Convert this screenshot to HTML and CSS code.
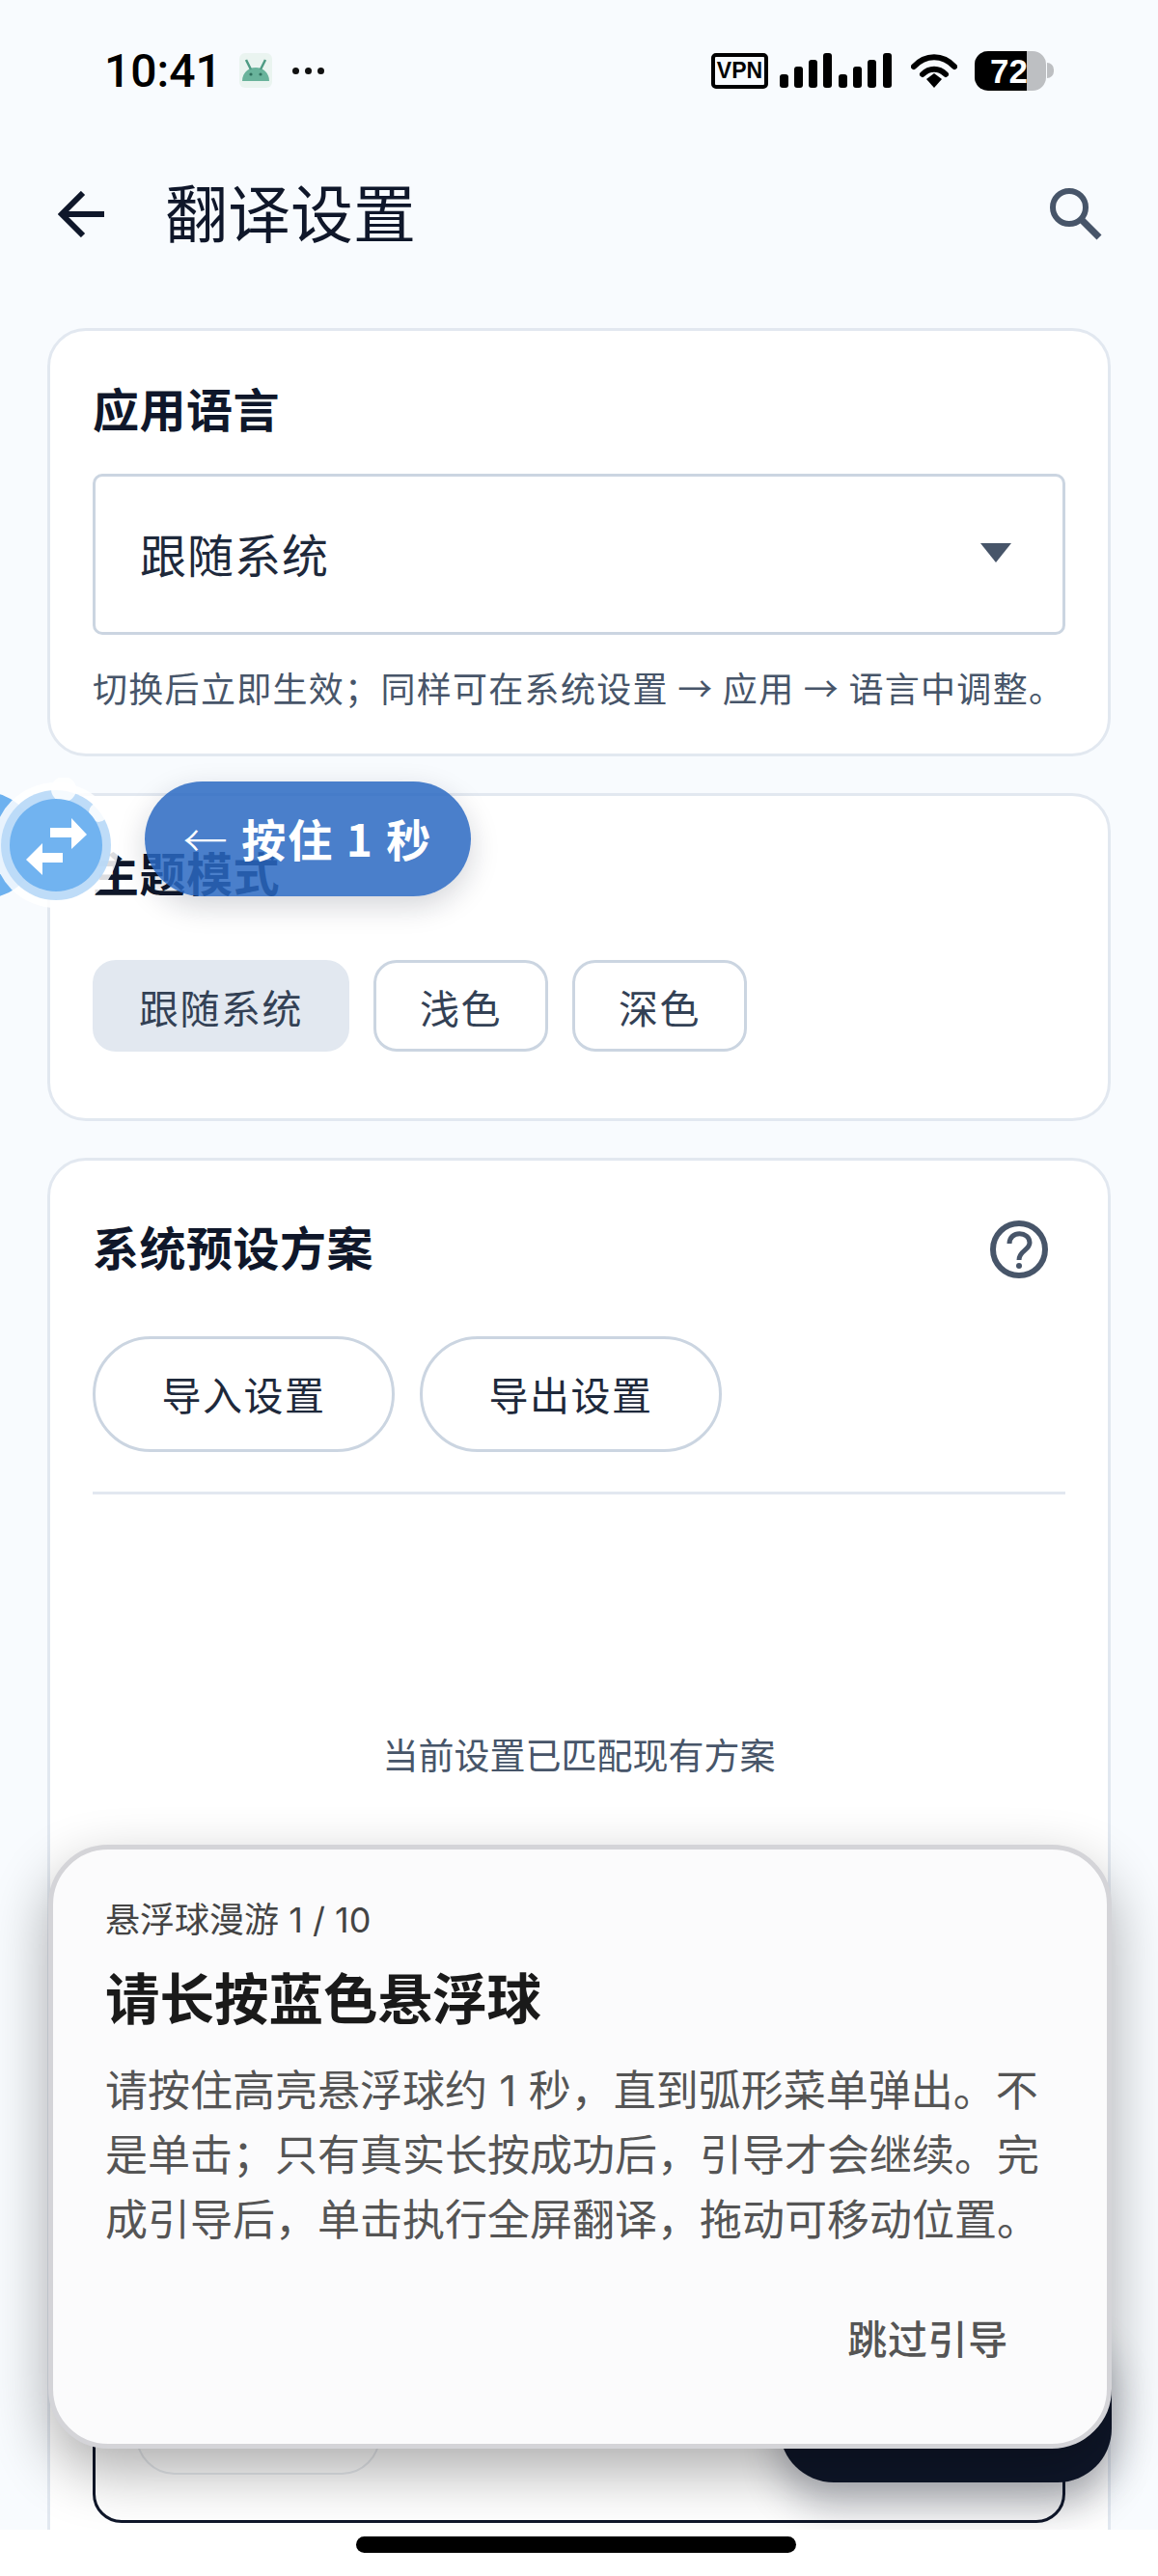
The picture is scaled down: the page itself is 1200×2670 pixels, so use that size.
FILE: index.html
```html
<!DOCTYPE html>
<html lang="zh-CN">
<head>
    <meta charset="UTF-8">
    <meta name="viewport" content="width=device-width, initial-scale=1.0">
    <title>翻译设置</title>
    <link rel="stylesheet" href="styles.css">
</head>
<body>
    <div class="status-bar">
        <div class="status-left">
            <span class="clock">10:41</span>
            <span class="app-tile">
                <svg width="30" height="24" viewBox="0 0 30 24"><path d="M1 23C1 15 7 9 15 9s14 6 14 14z" fill="#69b39b"/><path d="M5 1l5 10M25 1l-5 10" stroke="#4f9c85" stroke-width="2.5"/><circle cx="10" cy="16" r="1.6" fill="#2f6f5d"/><circle cx="20" cy="16" r="1.6" fill="#2f6f5d"/></svg>
            </span>
            <span class="dots"><i></i><i></i><i></i></span>
        </div>
        <div class="status-right">
            <span class="vpn">VPN</span>
            <svg class="signal" width="116" height="36" viewBox="0 0 116 36" fill="#000">
                <rect x="0" y="22" width="9" height="14" rx="3"/><rect x="15" y="14" width="9" height="22" rx="3"/><rect x="30" y="7" width="9" height="29" rx="3"/><rect x="45" y="0" width="9" height="36" rx="3"/>
                <rect x="61" y="22" width="9" height="14" rx="3"/><rect x="76" y="14" width="9" height="22" rx="3"/><rect x="91" y="7" width="9" height="29" rx="3"/><rect x="107" y="0" width="9" height="36" rx="3"/>
            </svg>
            <svg class="wifi" width="48" height="36" viewBox="0 0 48 36" fill="none" stroke="#000" stroke-linecap="round">
                <path d="M3 14C15 1 33 1 45 14" stroke-width="6"/>
                <path d="M12 22c7-7 17-7 24 0" stroke-width="6"/>
                <path d="M16 27l8-6 8 6-8 9z" fill="#000" stroke="none"/>
            </svg>
            <span class="battery"><span class="battery-fill">72</span></span>
            <span class="battery-tip"></span>
        </div>
    </div>

    <header class="topbar">
        <svg class="back" width="48" height="48" viewBox="0 0 48 48" fill="none" stroke="#0f172a" stroke-width="6"><path d="M48 24H4M26 2L4 24l22 22"/></svg>
        <h1>翻译设置</h1>
        <svg class="search" width="54" height="54" viewBox="0 0 54 54" fill="none" stroke="#475569"><circle cx="20" cy="20" r="17" stroke-width="6"/><path d="M32 32l19 19" stroke-width="7"/></svg>
    </header>

    <main class="content">
        <section class="card card-lang">
            <h2>应用语言</h2>
            <div class="select">
                <span>跟随系统</span>
                <span class="caret"></span>
            </div>
            <p class="hint">切换后立即生效；同样可在系统设置 → 应用 → 语言中调整。</p>
        </section>

        <section class="card card-theme">
            <h2>主题模式</h2>
            <div class="chips">
                <span class="chip chip-active">跟随系统</span>
                <span class="chip">浅色</span>
                <span class="chip">深色</span>
            </div>
        </section>

        <section class="card card-preset">
            <div class="card-head">
                <h2>系统预设方案</h2>
                <svg width="60" height="60" viewBox="0 0 60 60" fill="none" stroke="#475569"><circle cx="30" cy="30" r="27" stroke-width="6"/><path d="M20 24c0-14 21-13 21-1 0 8-11 8-11 18" stroke-width="5"/><circle cx="30" cy="47" r="3" fill="#475569" stroke="none"/></svg>
            </div>
            <div class="pill-row">
                <span class="pill">导入设置</span>
                <span class="pill">导出设置</span>
            </div>
            <div class="divider"></div>
            <p class="match">当前设置已匹配现有方案</p>
            <div class="field">
                <span class="ghost"></span>
            </div>
        </section>
    </main>

    <!-- floating ball with its long-press hint -->
    <svg class="ball" width="130" height="140" viewBox="0 0 130 140">
        <circle cx="-16" cy="70" r="55" fill="#6db1ef"/>
        <circle cx="58" cy="70" r="65" fill="#fff" fill-opacity=".85"/>
        <circle cx="58" cy="70" r="57" fill="#b7d8f7" fill-opacity=".9"/>
        <circle cx="66" cy="12" r="13" fill="#fff" fill-opacity=".85"/>
        <circle cx="102" cy="36" r="10" fill="#fff" fill-opacity=".85"/>
        <circle cx="58" cy="70" r="48" fill="#6db1ef" fill-opacity=".96"/>
        <path d="M52 52h22V42l16 17-16 15V62H52z" fill="#fff"/>
        <path d="M65 78H44V68L27 85l17 16V88h21z" fill="#fff"/>
    </svg>
    <div class="ball-hint"><span class="hint-arrow">←</span> 按住 1 秒</div>

    <div class="fab"></div>

    <aside class="guide">
        <div class="guide-step">悬浮球漫游 1 / 10</div>
        <h3>请长按蓝色悬浮球</h3>
        <p>请按住高亮悬浮球约 1 秒，直到弧形菜单弹出。不是单击；只有真实长按成功后，引导才会继续。完成引导后，单击执行全屏翻译，拖动可移动位置。</p>
        <div class="guide-actions"><span>跳过引导</span></div>
    </aside>

    <div class="nav-bar"><span class="nav-handle"></span></div>
</body>
</html>
```

FILE: styles.css
```css
* {
    margin: 0;
    padding: 0;
    box-sizing: border-box;
}

html,
body {
    width: 1200px;
    height: 2670px;
    overflow: hidden;
}

body {
    position: relative;
    background-color: #f8fbfe;
    color: #0f172a;
    font-family: "Inter", "Noto Sans CJK SC", sans-serif;
}

/* Status bar */
.status-bar {
    display: flex;
    justify-content: space-between;
    align-items: center;
    height: 146px;
    padding: 0 108px 0 108px;
}

.status-left,
.status-right {
    display: flex;
    align-items: center;
}

.clock {
    font-family: "Roboto", sans-serif;
    font-size: 48px;
    font-weight: 500;
    color: #000;
    width: 140px;
}

.app-tile {
    display: flex;
    justify-content: center;
    align-items: center;
    width: 34px;
    height: 36px;
    background-color: #eaf4f0;
    border-radius: 6px;
}

.dots {
    display: flex;
    gap: 6px;
    margin-left: 21px;
}

.dots i {
    width: 7px;
    height: 7px;
    border-radius: 50%;
    background-color: #111;
}

.vpn {
    width: 59px;
    height: 37px;
    border: 4px solid #000;
    border-radius: 5px;
    font-family: "Liberation Sans", sans-serif;
    font-size: 23px;
    font-weight: bold;
    line-height: 29px;
    text-align: center;
    color: #000;
}

.signal {
    margin-left: 12px;
}

.wifi {
    margin-left: 20px;
}

.battery {
    display: block;
    width: 74px;
    height: 41px;
    margin-left: 18px;
    background-color: #bdbfc2;
    border-radius: 14px;
    overflow: hidden;
}

.battery-fill {
    display: block;
    width: 54px;
    height: 41px;
    padding-left: 16px;
    background-color: #000;
    color: #fff;
    font-family: "Liberation Sans", sans-serif;
    font-size: 35px;
    font-weight: bold;
    line-height: 41px;
    white-space: nowrap;
    overflow: hidden;
}

.battery-tip {
    width: 7px;
    height: 16px;
    margin-left: 1px;
    background-color: #bdbfc2;
    border-radius: 0 8px 8px 0;
}

/* Top bar */
.topbar {
    display: flex;
    align-items: center;
    height: 152px;
    padding: 0 58px 0 60px;
}

.topbar h1 {
    flex: 1;
    margin-left: 63px;
    padding-top: 2px;
    font-size: 65px;
    font-weight: 400;
    line-height: 80px;
    color: #0f172a;
}

/* Cards */
.content {
    display: flex;
    flex-direction: column;
    gap: 38px;
    padding: 42px 49px 0;
}

.card {
    background-color: #fff;
    border: 3px solid #e2e8f0;
    border-radius: 40px;
    padding: 0 44px;
}

.card h2 {
    font-size: 48px;
    font-weight: 700;
    line-height: 60px;
    letter-spacing: 0.5px;
    color: #0f172a;
}

.card-lang {
    height: 444px;
    padding-top: 53px;
}

.select {
    display: flex;
    justify-content: space-between;
    align-items: center;
    height: 167px;
    margin-top: 35px;
    padding: 0 53px 4px 46px;
    border: 3px solid #cbd5e1;
    border-radius: 10px;
    font-size: 48px;
    letter-spacing: 1px;
    color: #1e293b;
}

.caret {
    width: 0;
    height: 0;
    border-left: 16px solid transparent;
    border-right: 16px solid transparent;
    border-top: 20px solid #475569;
}

.hint {
    margin-top: 29px;
    font-family: "Noto Sans CJK SC", sans-serif;
    font-size: 36px;
    line-height: 50px;
    letter-spacing: 1.3px;
    color: #475569;
    white-space: nowrap;
}

.card-theme {
    height: 340px;
    padding-top: 52px;
}

.chips {
    display: flex;
    gap: 25px;
    margin-top: 58px;
}

.chip {
    display: flex;
    justify-content: center;
    align-items: center;
    height: 95px;
    padding: 0 45px;
    border: 3px solid #cbd5e1;
    border-radius: 24px;
    font-size: 41px;
    letter-spacing: 1.5px;
    color: #334155;
}

.chip-active {
    background-color: #e2e8f0;
    border-color: #e2e8f0;
}

.card-preset {
    height: 1600px;
    padding-top: 62px;
}

.card-head {
    display: flex;
    justify-content: space-between;
    align-items: center;
    height: 60px;
    padding-right: 18px;
}

.pill-row {
    display: flex;
    gap: 26px;
    margin-top: 60px;
}

.pill {
    display: flex;
    justify-content: center;
    align-items: center;
    width: 313px;
    height: 120px;
    padding-bottom: 2px;
    border: 3px solid #cbd5e1;
    border-radius: 60px;
    font-size: 41px;
    letter-spacing: 1.5px;
    color: #1e293b;
}

.divider {
    height: 3px;
    margin-top: 41px;
    background-color: #e2e8f0;
}

.match {
    margin-top: 247px;
    font-size: 37px;
    line-height: 50px;
    text-align: center;
    color: #475569;
}

.field {
    display: flex;
    align-items: flex-end;
    height: 669px;
    margin-top: 100px;
    padding: 0 0 47px 42px;
    border: 3px solid #0f172a;
    border-radius: 30px;
}

.ghost {
    width: 253px;
    height: 90px;
    border: 2px solid #e8ebef;
    border-radius: 40px;
}

/* Overlays */
.ball {
    position: absolute;
    left: 0;
    top: 806px;
    overflow: hidden;
}

.ball-hint {
    position: absolute;
    left: 150px;
    top: 810px;
    width: 338px;
    height: 119px;
    border-radius: 60px;
    background-color: rgba(42, 105, 194, 0.85);
    box-shadow: 0 10px 30px rgba(15, 23, 42, 0.18);
    color: #fff;
    font-family: "Noto Sans CJK SC", sans-serif;
    font-size: 46px;
    font-weight: 700;
    line-height: 116px;
    text-align: center;
    letter-spacing: 2px;
    white-space: nowrap;
}

.hint-arrow {
    font-weight: 300;
}

.fab {
    position: absolute;
    left: 808px;
    top: 2400px;
    width: 344px;
    height: 173px;
    border-radius: 56px;
    background-color: #0f172a;
    box-shadow: 0 24px 40px rgba(15, 23, 42, 0.3);
}

.guide {
    position: absolute;
    left: 50px;
    top: 1912px;
    width: 1102px;
    height: 626px;
    padding: 50px 54px 0;
    background-color: #fbfbfc;
    border: 5px solid #d4d4d8;
    border-radius: 62px;
    box-shadow: 0 24px 60px rgba(0, 0, 0, 0.32);
}

.guide-step {
    font-size: 36px;
    line-height: 46px;
    color: #444;
}

.guide h3 {
    margin-top: 22px;
    font-size: 56.5px;
    font-weight: 700;
    line-height: 76px;
    color: #1a1a1a;
}

.guide p {
    margin-top: 23px;
    font-size: 44px;
    line-height: 67px;
    color: #555;
}

.guide-actions {
    display: flex;
    justify-content: flex-end;
    margin-top: 62px;
    padding-right: 48px;
    font-size: 41px;
    font-weight: 500;
    line-height: 56px;
    letter-spacing: 0.7px;
    color: #555;
}

.nav-bar {
    position: absolute;
    left: 0;
    right: 0;
    bottom: 0;
    display: flex;
    justify-content: center;
    height: 48px;
    padding: 7px 6px 0 0;
    background-color: #fff;
}

.nav-handle {
    width: 456px;
    height: 17px;
    border-radius: 9px;
    background-color: #000;
}
```
